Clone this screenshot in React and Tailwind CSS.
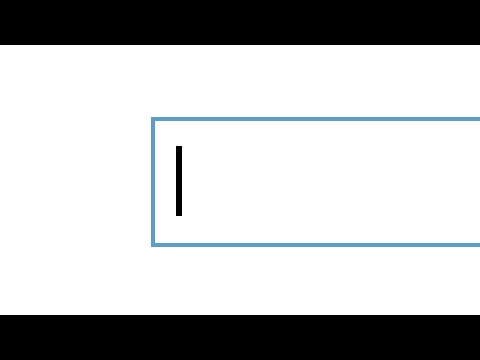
export default function App() {
  return (
    <div className="w-[480px] h-[360px] flex flex-col overflow-hidden bg-white">
      <div className="h-[45px] bg-black shrink-0" />
      <div className="flex-1 bg-white pt-[72px] pl-[151px] overflow-hidden">
        <div className="w-[360px] h-[130px] border-4 border-[#5c9ec9] bg-white pl-[21px] pt-[25px]">
          <div className="w-[6px] h-[70px] bg-black" />
        </div>
      </div>
      <div className="h-[45px] bg-black shrink-0" />
    </div>
  );
}
